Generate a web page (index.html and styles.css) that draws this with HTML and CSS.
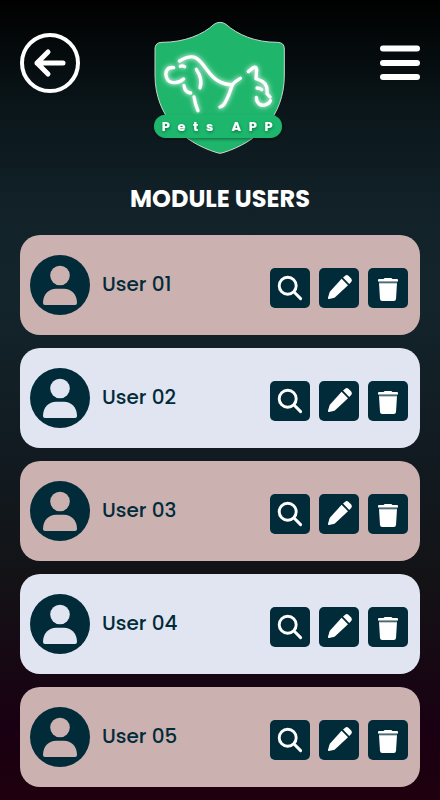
FILE: index.html
```html
<!DOCTYPE html>
<html lang="en">
<head>
  <meta charset="utf-8">
  <meta name="viewport" content="width=device-width, initial-scale=1">
  <title>Pets APP - Module Users</title>
  <link rel="stylesheet" href="styles.css">
</head>
<body>
  <svg class="sprite" aria-hidden="true">
    <symbol id="user" viewBox="0 0 60 60">
      <circle cx="30" cy="20.5" r="9.8"/>
      <path d="M15 50Q13 50 13 48C13 39 19 33.7 26 33.7H34C41 33.7 47 39 47 48Q47 50 45 50Z"/>
    </symbol>
    <symbol id="search" viewBox="0 0 40 40">
      <g fill="none" stroke="currentColor" stroke-linecap="round">
        <circle cx="17.7" cy="17.7" r="8.5" stroke-width="2.9"/>
        <path d="M24.3 24.3L30.6 30.6" stroke-width="3"/>
      </g>
    </symbol>
    <symbol id="edit" viewBox="0 0 40 40">
      <path d="M22.6 10.8L29 17.2L16.4 29Q15.5 29.8 14.5 30.1L10 31.1Q8.7 31.3 9 29.8L10.3 25.2Q10.6 24.2 11.3 23.3Z"/>
      <path d="M24 9.6L26.2 7.8Q27.6 6.4 29.4 7.8L32.2 10.6Q33.7 12.4 32.2 13.9L30.2 15.9Z"/>
    </symbol>
    <symbol id="trash" viewBox="0 0 40 40">
      <path d="M11 11H15.6Q16 10 17.2 10H22.8Q24 10 24.4 11H29Q30 11 30 12V13.6H10V12Q10 11 11 11Z"/>
      <path d="M10.8 13.6H29.2L29 15.2H11Z" opacity=".3"/>
      <path d="M11 15.2H29L28 31Q27.8 33 25.8 33H14.2Q12.2 33 12 31Z"/>
    </symbol>
  </svg>

  <header class="topbar">
    <button class="back" type="button" aria-label="Back">
      <svg viewBox="0 0 60 60"><circle cx="30" cy="30" r="28"/><path d="M43 30H17M28 19L17 30L28 41"/></svg>
    </button>
    <svg class="logo" viewBox="0 0 450 435" role="img" aria-label="Pets APP">
      <defs>
        <filter id="glow" x="-20%" y="-20%" width="140%" height="140%">
          <feGaussianBlur stdDeviation="8" result="blur"/>
          <feMerge><feMergeNode in="blur"/><feMergeNode in="SourceGraphic"/></feMerge>
        </filter>
        <filter id="shadow" x="-10%" y="-30%" width="120%" height="180%">
          <feDropShadow dx="1" dy="4" stdDeviation="4" flood-color="#000" flood-opacity=".4"/>
        </filter>
      </defs>
      <path class="shield" d="M207 28Q225 16 243 28C278 59 330 82 397 82Q418 82 418 102V180C418 305 336 382 234 413Q225 417 216 413C113 382 30 303 30 180V102Q30 82 51 82C118 82 174 59 207 28Z"/>
      <g class="pets" filter="url(#glow)">
        <path d="M103 138C122 127 140 122 153 129C178 143 188 180 220 198Q239 209 262 209C268 202 277 195 286 190"/>
        <path d="M262 209C256 228 249 247 240 263Q235 273 225 276"/>
        <path d="M86 158C68 155 58 170 65 188C71 206 98 208 116 192M106 154Q112 151 119 155"/>
        <path d="M117 212Q120 232 137 234M154 163C166 181 171 202 165 219M147 246Q151 270 159 287"/>
        <path d="M310 170L325 158Q334 153 335 165L333 191C349 197 360 201 365 216Q367 226 366 236L375 246M336 219Q345 219 350 224M334 247C334 268 350 274 362 269Q373 266 376 257"/>
      </g>
      <rect class="ribbon" x="27" y="299" width="384" height="70" rx="35" filter="url(#shadow)"/>
      <text class="brand" x="50" y="347" filter="url(#shadow)">Pets APP</text>
    </svg>
    <button class="menu" type="button" aria-label="Menu">
      <svg viewBox="0 0 40 36"><path d="M3 3.5H37M3 18H37M3 32H37"/></svg>
    </button>
  </header>

  <main class="content">
    <h1>MODULE USERS</h1>
    <ul class="users">
      <li class="user">
        <svg class="avatar" aria-hidden="true"><use href="#user"/></svg>
        <span class="name">User 01</span>
        <div class="actions">
          <button type="button" aria-label="View User 01"><svg><use href="#search"/></svg></button>
          <button type="button" aria-label="Edit User 01"><svg><use href="#edit"/></svg></button>
          <button type="button" aria-label="Delete User 01"><svg><use href="#trash"/></svg></button>
        </div>
      </li>
      <li class="user">
        <svg class="avatar" aria-hidden="true"><use href="#user"/></svg>
        <span class="name">User 02</span>
        <div class="actions">
          <button type="button" aria-label="View User 02"><svg><use href="#search"/></svg></button>
          <button type="button" aria-label="Edit User 02"><svg><use href="#edit"/></svg></button>
          <button type="button" aria-label="Delete User 02"><svg><use href="#trash"/></svg></button>
        </div>
      </li>
      <li class="user">
        <svg class="avatar" aria-hidden="true"><use href="#user"/></svg>
        <span class="name">User 03</span>
        <div class="actions">
          <button type="button" aria-label="View User 03"><svg><use href="#search"/></svg></button>
          <button type="button" aria-label="Edit User 03"><svg><use href="#edit"/></svg></button>
          <button type="button" aria-label="Delete User 03"><svg><use href="#trash"/></svg></button>
        </div>
      </li>
      <li class="user">
        <svg class="avatar" aria-hidden="true"><use href="#user"/></svg>
        <span class="name">User 04</span>
        <div class="actions">
          <button type="button" aria-label="View User 04"><svg><use href="#search"/></svg></button>
          <button type="button" aria-label="Edit User 04"><svg><use href="#edit"/></svg></button>
          <button type="button" aria-label="Delete User 04"><svg><use href="#trash"/></svg></button>
        </div>
      </li>
      <li class="user">
        <svg class="avatar" aria-hidden="true"><use href="#user"/></svg>
        <span class="name">User 05</span>
        <div class="actions">
          <button type="button" aria-label="View User 05"><svg><use href="#search"/></svg></button>
          <button type="button" aria-label="Edit User 05"><svg><use href="#edit"/></svg></button>
          <button type="button" aria-label="Delete User 05"><svg><use href="#trash"/></svg></button>
        </div>
      </li>
    </ul>
  </main>
</body>
</html>
```

FILE: styles.css
```css
* {
  box-sizing: border-box;
}

body {
  margin: 0;
  min-height: 100vh;
  font-family: Poppins, Inter, sans-serif;
  color: #fff;
  background: linear-gradient(#000, #0a1519 13%, #112127 25%, #13252b 36%, #111b21 56%, #131316 72%, #190012 91%, #1f000e);
}

button {
  padding: 0;
  border: 0;
  background: none;
  color: #fff;
  cursor: pointer;
}

svg {
  display: block;
}

.sprite {
  position: absolute;
  width: 0;
  height: 0;
}

.topbar {
  display: grid;
  grid-template-columns: 1fr auto 1fr;
  align-items: start;
  padding: 15px 20px 0;
}

.back {
  width: 60px;
  height: 60px;
  margin-top: 18px;
}

.back svg,
.menu svg {
  width: 100%;
  height: 100%;
  fill: none;
  stroke: currentColor;
  stroke-width: 4;
  stroke-linecap: round;
  stroke-linejoin: round;
}

.logo {
  width: 150px;
  height: 145px;
}

.shield {
  fill: #1fb66c;
  stroke: #c9d3ce;
  stroke-width: 3;
}

.pets {
  fill: none;
  stroke: #fff;
  stroke-width: 10;
  stroke-linecap: round;
  stroke-linejoin: round;
}

.ribbon {
  fill: #1fb66c;
}

.brand {
  fill: #fff;
  font-size: 39px;
  font-weight: 700;
  letter-spacing: 23px;
}

.menu {
  justify-self: end;
  width: 40px;
  height: 36px;
  margin-top: 30px;
}

.menu svg {
  stroke-width: 6;
}

.back path {
  stroke-width: 5;
}

.content {
  padding: 21px 20px 13px;
}

h1 {
  margin: 0 0 18px;
  font-size: 24px;
  line-height: 36px;
  font-weight: 700;
  text-align: center;
}

.users {
  display: grid;
  gap: 13px;
  margin: 0;
  padding: 0;
  list-style: none;
}

.user {
  display: flex;
  align-items: center;
  gap: 12px;
  min-height: 100px;
  padding: 0 12px 0 10px;
  border-radius: 20px;
  color: #cbb1b0;
  background: currentColor;
}

.user:nth-child(even) {
  color: #e1e5f1;
}

.avatar {
  flex: none;
  width: 60px;
  height: 60px;
  border-radius: 50%;
  background: #022b39;
  fill: currentColor;
}

.name {
  flex: 1;
  margin-bottom: 2px;
  font-size: 20px;
  line-height: 30px;
  font-weight: 500;
  color: #022b39;
}

.actions {
  display: flex;
  gap: 9px;
  margin-top: 6px;
}

.actions button {
  width: 40px;
  height: 40px;
  border-radius: 5px;
  background: #022b39;
}

.actions svg {
  width: 40px;
  height: 40px;
  fill: currentColor;
}
```
